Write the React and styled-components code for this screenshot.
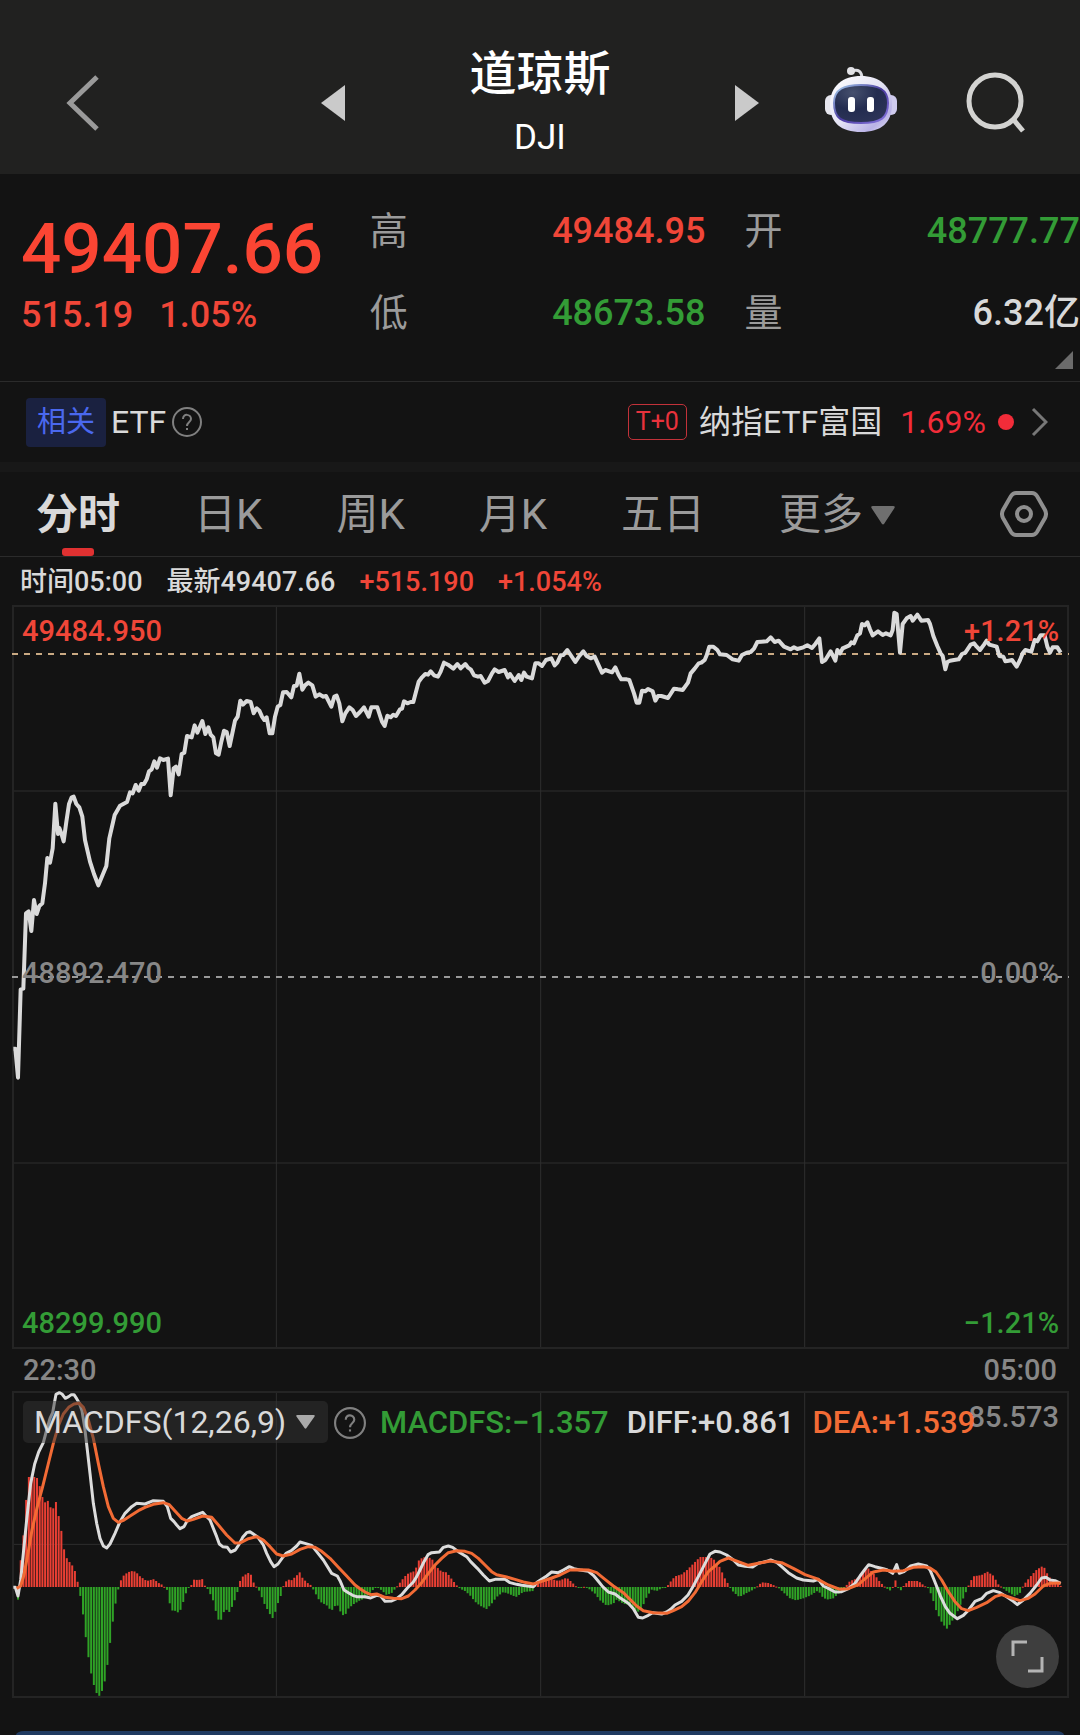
import React, { useState } from "react";
import styled, { createGlobalStyle } from "styled-components";

const colors = {
  bg: "#131313",
  header: "#212120",
  strip: "#181818",
  line: "#2b2b2b",
  up: "#f04638",
  down: "#339c36",
  white: "#d9d9d9",
  muted: "#9b9b9b",
  dim: "#878787",
  orange: "#f26b35",
};

const GlobalStyle = createGlobalStyle`
  * {
    box-sizing: border-box;
  }

  body {
    margin: 0;
    background-color: ${colors.bg};
    color: ${colors.white};
    font-family: Roboto, "Noto Sans CJK SC", sans-serif;
    line-height: 1.2;
    overflow-x: hidden;
  }

  button,
  select {
    margin: 0;
    padding: 0;
    border: none;
    background: none;
    color: inherit;
    font: inherit;
    cursor: pointer;
  }

  svg {
    display: block;
  }
`;

const Page = styled.main`
  display: flex;
  flex-direction: column;
  min-height: 100vh;
`;

/* ---------- header ---------- */

const Header = styled.header`
  display: grid;
  grid-template-columns: 22fr 30fr 22fr;
  align-items: center;
  padding-top: 32px;
  background-color: ${colors.header};
`;

const HeaderSide = styled.div`
  display: flex;
  align-items: center;
  justify-content: ${({ end }) => (end ? "flex-end" : "flex-start")};
  gap: 68px;
  padding: ${({ end }) => (end ? "0 53px 0 0" : "0 0 0 64px")};
`;

const Switcher = styled.div`
  display: flex;
  align-items: center;
  justify-content: space-between;
`;

const Title = styled.div`
  padding: 10px 0 4px;
  text-align: center;
  color: #fff;

  h1 {
    margin: 0;
    font-size: 47px;
    line-height: 64px;
    font-weight: 500;
  }

  p {
    margin: 0;
    font-size: 35px;
    line-height: 64px;
  }
`;

/* ---------- quote ---------- */

const Quote = styled.section`
  position: relative;
  display: grid;
  grid-template-columns: 12fr 13fr 13fr;
  column-gap: 39px;
  padding: 17px 0 26px 21px;
  border-bottom: 1px solid ${colors.line};
`;

const Price = styled.div`
  padding-top: 18px;
  color: #fb4533;
  font-weight: 500;
`;

const Last = styled.div`
  font-size: 71px;
  line-height: 80px;
`;

const Change = styled.div`
  display: flex;
  gap: 26px;
  font-size: 36px;
  line-height: 52px;
  color: ${colors.up};
`;

const Stats = styled.dl`
  margin: 0;
`;

const Stat = styled.div`
  display: flex;
  align-items: center;
  justify-content: space-between;
  height: 82px;
  font-size: 36px;

  dt {
    font-size: 38px;
    color: ${colors.muted};
  }

  dd {
    margin: 0;
    font-weight: 500;
    color: ${({ color }) => colors[color]};
  }
`;

const Corner = styled.button`
  position: absolute;
  right: 7px;
  bottom: 12px;
`;

/* ---------- related etf ---------- */

const EtfBar = styled.section`
  display: flex;
  align-items: center;
  justify-content: space-between;
  height: 80px;
  padding: 0 32px 0 26px;
  font-size: 32px;
`;

const EtfGroup = styled.div`
  display: flex;
  align-items: center;
`;

const EtfLink = styled.a`
  display: flex;
  align-items: center;
  color: inherit;
  text-decoration: none;
`;

const Badge = styled.span`
  margin-right: 5px;
  padding: 0 11px;
  border-radius: 4px;
  background-color: #1a2140;
  color: #4a68ee;
  font-size: 29px;
  line-height: 49px;
`;

const HelpButton = styled.button`
  margin-left: 6px;
`;

const Tag = styled.span`
  margin-right: 12px;
  padding: 0 7px;
  border: 1px solid #c2323a;
  border-radius: 5px;
  color: #e8323c;
  font-size: 25px;
  line-height: 34px;
`;

const EtfChange = styled.span`
  margin-left: 18px;
  color: #f22c39;
`;

const Dot = styled.span`
  width: 16px;
  height: 16px;
  margin: 0 17px 0 12px;
  border-radius: 50%;
  background-color: #f22c39;
`;

const Strip = styled.div`
  height: 10px;
  background-color: ${colors.strip};
`;

/* ---------- tabs ---------- */

const TabBar = styled.nav`
  display: flex;
  align-items: center;
  justify-content: space-between;
  height: 85px;
  padding: 0 32px 0 36px;
  border-bottom: 1px solid ${colors.line};
`;

const Tabs = styled.div`
  display: flex;
  gap: 74px;
  height: 100%;
`;

const Tab = styled.button`
  position: relative;
  display: flex;
  align-items: center;
  gap: 8px;
  padding-top: 3px;
  font-size: 42px;
  font-weight: ${({ active }) => (active ? 700 : 400)};
  color: ${({ active }) => (active ? colors.white : colors.muted)};

  &::after {
    content: "";
    display: ${({ active }) => (active ? "block" : "none")};
    position: absolute;
    left: calc(50% - 16px);
    bottom: 0;
    width: 32px;
    height: 8px;
    border-radius: 3px;
    background-color: #e03131;
  }
`;

/* ---------- charts ---------- */

const InfoRow = styled.div`
  display: flex;
  align-items: center;
  gap: 24px;
  height: 48px;
  padding: 2px 20px 0;
  font-size: 27px;
  font-weight: 500;
`;

const Colored = styled.span`
  color: ${({ color }) => colors[color]};
`;

const Panel = styled.section`
  position: relative;
  margin: 0 11px 0 12px;
  height: ${({ height }) => height}px;
`;

const Plot = styled.svg`
  width: 100%;
  height: 100%;
`;

const AxisLabels = styled.div`
  position: absolute;
  inset: 0;
  display: flex;
  flex-direction: column;
  justify-content: space-between;
  padding: 6px 10px;
  pointer-events: none;
`;

const AxisRow = styled.div`
  display: flex;
  justify-content: ${({ end }) => (end ? "flex-end" : "space-between")};
  padding-bottom: ${({ raised }) => (raised ? 8 : 0)}px;
  font-size: 29px;
  font-weight: 500;
  line-height: 40px;
  color: ${({ color }) => colors[color]};
`;

const TimeAxis = styled.div`
  display: flex;
  justify-content: space-between;
  padding: 0 23px;
  font-size: 29px;
  font-weight: 500;
  line-height: 42px;
  color: ${colors.dim};
`;

const Indicator = styled.div`
  position: absolute;
  top: 10px;
  left: 11px;
  display: flex;
  align-items: center;
  font-size: 31px;
  line-height: 42px;
  white-space: nowrap;
`;

const Picker = styled.label`
  position: relative;

  select {
    appearance: none;
    height: 42px;
    padding: 0 41px 0 11px;
    border-radius: 5px;
    background-color: rgba(52, 52, 52, 0.5);
    font-size: 32px;
  }

  svg {
    position: absolute;
    right: 13px;
    top: 14px;
    pointer-events: none;
  }
`;

const Readings = styled.div`
  display: flex;
  gap: 18px;
  margin-left: 14px;
  font-weight: 500;
`;

const Expand = styled.button`
  position: absolute;
  right: 10px;
  bottom: 10px;
  display: grid;
  place-items: center;
  width: 63px;
  height: 63px;
  border-radius: 50%;
  background-color: #3e3e3e;
`;

const BottomSheet = styled.div`
  height: 4px;
  margin: 33px 16px 0;
  border-radius: 8px 8px 0 0 / 4px 4px 0 0;
  background-color: #1f3a60;
`;

/* ---------- data ---------- */

const price =
  "40,1346 46,1346 54,1433 62,1168 70,1166 78,940 86,934 94,993 102,900 110,942 118,918 127,910 135,850 142,774 150,788 158,745 166,611 174,702 178,684 184,700 191,724 199,665 207,612 215,592 221,590 229,612 238,622 247,650 255,720 270,785 282,822 295,856 305,832 319,798 328,715 344,645 360,617 381,606 390,577 398,580 407,555 416,572 424,552 432,552 440,538 447,514 455,508 463,484 471,503 480,475 490,480 504,476 512,586 521,505 528,500 536,523 545,462 553,458 561,408 575,412 584,376 592,398 607,363 616,402 625,382 632,404 640,412 648,460 656,464 664,425 672,392 680,396 689,438 705,362 713,350 721,302 729,314 740,303 752,306 761,340 770,325 778,332 786,350 793,360 800,352 809,400 817,400 825,350 833,320 841,315 849,277 860,276 874,292 882,258 890,257 898,221 907,269 915,256 925,248 937,256 947,290 958,283 970,290 978,288 994,320 1003,290 1010,287 1018,310 1027,364 1036,340 1048,322 1058,330 1068,348 1080,336 " +
  "1092,322 1106,350 1114,322 1132,322 1146,365 1154,378 1162,347 1172,352 1180,344 1188,348 1200,328 1206,326 1212,304 1222,310 1232,306 1240,306 1248,275 1256,245 1266,232 1276,222 1284,224 1292,214 1302,226 1314,230 1322,215 1332,188 1344,194 1360,206 1372,192 1382,205 1396,192 1404,203 1412,208 1422,226 1434,230 1442,228 1454,248 1464,243 1476,220 1484,208 1496,216 1514,210 1524,232 1530,222 1544,243 1556,225 1564,240 1572,218 1580,230 1596,235 1606,190 1616,190 1626,198 1638,180 1654,175 1664,196 1672,188 1682,166 1690,165 1702,150 1714,168 1726,186 1738,168 1750,154 1760,168 1772,175 1784,170 1796,196 1806,218 1816,210 1836,217 1846,202 1856,225 1864,238 1880,238 1888,240 1902,280 1910,308 1918,308 1926,272 1936,274 1944,267 1958,274 1966,302 1974,288 1984,288 2004,294 2022,266 2034,268 2048,270 2064,248 2072,220 2084,206 2096,190 2104,188 2114,180 2120,166 2128,140 2140,140 2152,150 " +
  "2160,163 2180,165 2198,178 2216,182 2226,165 2240,158 2252,156 2262,146 2272,126 2284,125 2300,124 2312,112 2324,126 2336,122 2352,140 2372,148 2382,142 2392,147 2410,142 2422,136 2436,144 2446,132 2458,115 2466,186 2476,180 2492,154 2500,170 2506,182 2512,150 2520,160 2528,145 2548,136 2554,127 2562,130 2572,106 2580,100 2586,72 2594,76 2602,67 2610,88 2618,106 2634,94 2648,105 2658,100 2672,106 2678,90 2683,38 2690,42 2700,158 2708,72 2720,55 2732,48 2738,62 2752,44 2764,62 2784,60 2790,72 2800,108 2812,138 2822,160 2828,168 2836,208 2842,186 2850,182 2862,180 2876,178 2886,162 2896,158 2912,134 2922,130 2930,140 2940,150 2952,134 2960,122 2968,134 2990,140 2998,168 3010,170 3016,184 3026,182 3036,180 3050,200 3060,180 3068,160 3076,150 3094,155 3104,120 3112,124 3122,106 3134,106 3142,140 3150,158 3158,142 3172,142 3182,158";

const diff =
  "40,742 46,742 54,768 62,720 70,640 80,540 92,430 104,372 116,336 130,308 140,270 150,235 158,218 163,190 168,163 178,158 186,162 196,175 206,170 214,164 222,164 230,176 238,190 246,212 254,262 262,330 270,400 280,490 290,550 300,595 310,618 320,624 330,612 345,580 360,545 375,520 395,500 410,490 435,492 460,482 490,484 502,500 512,535 522,545 530,555 540,566 552,560 560,545 575,530 590,524 608,517 618,528 630,540 640,565 650,590 658,612 668,620 682,622 692,636 706,630 716,615 728,592 740,578 750,575 760,582 774,592 790,615 800,640 812,665 822,680 834,672 846,655 858,640 874,632 890,618 900,606 915,610 935,616 950,635 970,660 995,700 1012,708 1020,722 1032,750 1045,758 1058,766 1070,770 1080,770 " +
  "1095,770 1112,774 1130,766 1142,768 1155,784 1175,783 1190,776 1205,764 1222,744 1240,726 1250,710 1260,690 1272,665 1284,644 1295,638 1318,636 1330,622 1345,618 1358,622 1375,635 1400,650 1412,665 1432,685 1450,705 1468,723 1485,718 1515,718 1530,728 1550,733 1565,736 1600,740 1612,726 1640,708 1655,696 1675,698 1690,690 1708,680 1722,686 1740,690 1765,694 1780,706 1792,720 1808,740 1825,756 1845,762 1862,775 1885,790 1900,806 1915,832 1928,834 1945,826 1958,818 1985,822 2000,816 2012,808 2025,795 2045,784 2064,765 2080,738 2100,700 2118,665 2130,642 2145,634 2160,636 " +
  "2180,645 2200,660 2215,675 2235,679 2258,681 2275,670 2300,664 2312,660 2330,667 2345,680 2365,698 2390,714 2410,720 2440,723 2455,718 2470,738 2485,745 2505,756 2525,755 2545,746 2565,730 2580,708 2597,685 2606,674 2625,680 2650,686 2662,690 2678,700 2690,674 2698,700 2712,695 2732,678 2755,672 2780,678 2790,690 2800,714 2812,744 2822,770 2836,800 2850,820 2872,836 2890,826 2906,810 2925,784 2945,776 2960,760 2980,752 3000,758 3020,770 3040,784 3052,794 3070,780 3090,760 3110,735 3125,714 3138,712 3150,720 3165,722 3182,730";

const dea =
  "50,745 62,738 72,705 84,640 96,570 112,500 128,440 144,375 160,310 175,258 190,222 206,202 222,192 238,190 250,202 265,240 280,295 295,370 310,440 325,500 340,535 355,547 372,540 395,525 415,512 435,502 460,493 490,488 508,494 525,513 545,535 562,543 580,538 608,528 635,532 655,555 680,585 705,609 722,608 745,596 770,590 790,600 810,620 830,642 850,648 875,642 900,628 925,620 945,622 965,634 990,655 1015,682 1040,708 1065,735 1080,746 " +
  "1095,756 1112,764 1130,762 1155,772 1180,775 1205,776 1225,768 1245,750 1265,728 1285,700 1305,675 1325,655 1345,638 1370,632 1395,634 1415,640 1435,655 1455,675 1475,695 1490,704 1520,711 1545,718 1570,726 1600,732 1625,724 1655,714 1680,705 1710,690 1740,689 1765,690 1790,698 1815,718 1840,738 1870,758 1890,778 1910,798 1930,812 1960,818 2000,820 2020,812 2045,800 2065,783 2085,758 2105,725 2125,695 2145,678 2160,664 " +
  "2185,654 2215,665 2245,676 2275,670 2310,663 2345,668 2380,685 2415,704 2450,716 2485,735 2520,748 2545,746 2575,734 2600,712 2620,696 2650,690 2680,694 2710,692 2740,682 2770,680 2790,684 2808,696 2825,720 2845,755 2865,785 2885,806 2905,812 2930,802 2960,788 2985,770 3005,764 3035,774 3060,782 3085,775 3105,762 3130,738 3150,730 3182,729";

// [x, height] turning points of the histogram, positive is above zero
const histogram = [
  [46, 0], [54, -40], [60, 60], [70, 150], [78, 255], [84, 330], [110, 330], [120, 300],
  [132, 250], [142, 262], [150, 242], [158, 228], [166, 265], [174, 222], [182, 185], [190, 122],
  [198, 90], [206, 78], [222, 58], [231, 25], [238, -10], [246, -55], [254, -125], [262, -188],
  [270, -242], [278, -282], [287, -312], [295, -330], [303, -320], [311, -298], [319, -260], [327, -195],
  [335, -130], [343, -70], [351, -25], [358, 8], [366, 28], [374, 38], [392, 48], [408, 46],
  [416, 35], [440, 18], [463, 24], [472, 14], [488, 6], [496, -3], [504, -12], [512, -70],
  [530, -72], [537, -80], [545, -60], [560, -12], [568, 0], [576, 8], [584, 26], [592, 20],
  [608, 24], [616, 0], [625, -8], [640, -42], [648, -75], [656, -100], [664, -98], [675, -65],
  [688, -75], [700, -52], [712, -16], [719, 16], [730, 34], [745, 42], [754, 36], [762, 10],
  [770, 0], [778, -12], [793, -50], [809, -80], [817, -95], [827, -72], [835, -45], [843, -25],
  [849, 0], [857, 16], [866, 22], [874, 20], [890, 34], [898, 46], [907, 28], [920, 14],
  [932, 6], [940, -8], [960, -44], [980, -55], [994, -72], [1010, -50], [1026, -84], [1035, -85],
  [1045, -65], [1060, -52], [1080, -40], [1095, -34], [1115, -12], [1130, 0], [1145, -10], [1160, -24],
  [1175, -18], [1190, 0], [1205, 20], [1220, 38], [1235, 45], [1245, 48], [1255, 78], [1262, 85],
  [1280, 92], [1296, 84], [1310, 60], [1325, 46], [1340, 44], [1355, 24], [1370, 5], [1380, -5],
  [1395, -12], [1410, -25], [1425, -44], [1440, -56], [1460, -66], [1475, -50], [1490, -30], [1510, -15],
  [1525, -20], [1548, -30], [1570, -15], [1600, -12], [1606, 10], [1630, 22], [1655, 24], [1675, 18],
  [1700, 28], [1715, 15], [1730, 0], [1745, -3], [1755, 2], [1770, -8], [1785, -20], [1800, -40],
  [1820, -56], [1840, -50], [1850, -38], [1870, -50], [1890, -55], [1910, -78], [1925, -65], [1940, -30],
  [1955, -8], [1970, -12], [1985, -4], [2000, 0], [2010, 14], [2025, 32], [2045, 38], [2060, 50],
  [2080, 70], [2100, 90], [2130, 90], [2145, 80], [2160, 58], [2175, 25], [2190, 0], [2200, -15],
  [2218, -30], [2240, -18], [2260, -8], [2270, 0], [2285, 14], [2305, 12], [2320, 6], [2335, -2],
  [2350, -16], [2370, -34], [2388, -40], [2410, -34], [2430, -26], [2455, -10], [2465, -28], [2480, -38],
  [2500, -34], [2520, -16], [2535, 0], [2550, 18], [2570, 25], [2590, 45], [2600, 60], [2620, 42],
  [2640, 15], [2655, 0], [2665, -8], [2674, -12], [2680, 5], [2690, 28], [2697, -20], [2708, 0],
  [2725, 18], [2755, 18], [2770, 6], [2785, -4], [2795, -25], [2810, -75], [2825, -105], [2840, -126],
  [2850, -112], [2870, -80], [2885, -45], [2900, -10], [2908, 10], [2920, 32], [2945, 36], [2962, 46],
  [2980, 34], [2995, 8], [3005, 0], [3020, -12], [3045, -28], [3060, -18], [3070, 5], [3090, 30],
  [3110, 52], [3130, 64], [3142, 40], [3155, 20], [3170, 14], [3178, 10], [3190, -10],
];

const ZERO = 741;
const BAR_COUNT = 387;

const bars = Array.from({ length: BAR_COUNT }, (_, i) => {
  const x = 46 + (i * 3136) / (BAR_COUNT - 1);
  const next = Math.max(1, histogram.findIndex((point) => point[0] >= x));
  const [x0, y0] = histogram[next - 1];
  const [x1, y1] = histogram[next];
  const value = y0 + ((y1 - y0) * (x - x0)) / (x1 - x0);
  return { x: x - 3, value };
});

const columns = [829, 1622, 2414];

const tabs = ["分时", "日K", "周K", "月K", "五日", "更多"];

const stats = [
  [
    { label: "高", value: "49484.95", color: "up" },
    { label: "低", value: "48673.58", color: "down" },
  ],
  [
    { label: "开", value: "48777.77", color: "down" },
    { label: "量", value: "6.32亿", color: "white" },
  ],
];

/* ---------- icons ---------- */

const BackIcon = () => (
  <svg width="37" height="58" viewBox="0 0 37 58" fill="none">
    <path d="M33 3L6 29L33 55" stroke="#9a9a9a" strokeWidth="5" />
  </svg>
);

const ArrowIcon = ({ right }) => (
  <svg width="24" height="36" viewBox="0 0 24 36">
    <path d={right ? "M0 0L24 18L0 36Z" : "M24 0L0 18L24 36Z"} fill="#cacaca" />
  </svg>
);

const RobotIcon = () => (
  <svg width="72" height="74" viewBox="0 0 72 74">
    <defs>
      <linearGradient id="shell" x1="0" y1="0" x2="1" y2="1">
        <stop offset="0" stopColor="#ffffff" />
        <stop offset="0.5" stopColor="#e4e3f4" />
        <stop offset="0.8" stopColor="#b9b2e6" />
        <stop offset="1" stopColor="#e6e4f5" />
      </linearGradient>
      <linearGradient id="rim" x1="0" y1="0" x2="1" y2="1">
        <stop offset="0" stopColor="#a9d3ee" />
        <stop offset="0.5" stopColor="#4a3aa0" />
        <stop offset="1" stopColor="#8878e0" />
      </linearGradient>
      <radialGradient id="visor" cx="0.35" cy="0.2" r="0.9">
        <stop offset="0" stopColor="#46506e" />
        <stop offset="0.5" stopColor="#232c50" />
        <stop offset="1" stopColor="#2e3558" />
      </radialGradient>
    </defs>
    <path d="M27 5C33 3 37 5 37 13" stroke="#dcdce2" strokeWidth="3" fill="none" />
    <circle cx="26" cy="5" r="4" fill="#e2e2e6" />
    <rect x="0" y="29" width="12" height="20" rx="6" fill="#e6e6ee" />
    <rect x="60" y="29" width="12" height="20" rx="6" fill="#cfcbee" />
    <path
      d="M36 10C54 10 67 20 67 38C67 57 56 66 36 66C16 66 5 57 5 38C5 20 18 10 36 10Z"
      fill="url(#shell)"
    />
    <path
      d="M36 19C53 19 63 23 63 37C63 52 56 57 36 57C16 57 9 52 9 37C9 23 19 19 36 19Z"
      fill="url(#visor)"
      stroke="url(#rim)"
      strokeWidth="2"
    />
    <rect x="23" y="31" width="7" height="15" rx="3" fill="#fff" />
    <rect x="42" y="31" width="7" height="15" rx="3" fill="#fff" />
  </svg>
);

const SearchIcon = () => (
  <svg width="62" height="62" viewBox="0 0 62 62" fill="none" stroke="#d3d3d1" strokeWidth="5">
    <circle cx="30" cy="29" r="26" />
    <path d="M48 47L58 59" />
  </svg>
);

const HelpIcon = ({ size = 30 }) => (
  <svg width={size} height={size} viewBox="0 0 30 30" fill="none" stroke="#808080" strokeWidth="2">
    <circle cx="15" cy="15" r="14" />
    <path d="M11 12C11 6 19 7 19 12C19 15 15 15 15 19" />
    <path d="M15 21V23" />
  </svg>
);

const ChevronIcon = () => (
  <svg width="17" height="30" viewBox="0 0 17 30" fill="none">
    <path d="M2 2L15 15L2 28" stroke="#777" strokeWidth="3" />
  </svg>
);

const CaretIcon = ({ width, height, fill }) => (
  <svg width={width} height={height} viewBox="0 0 24 20" preserveAspectRatio="none">
    <path d="M2 0H22Q25 0 23 3L13 19Q12 20 11 19L1 3Q-1 0 2 0Z" fill={fill} />
  </svg>
);

const SettingsIcon = () => (
  <svg width="48" height="46" viewBox="0 0 48 46" fill="none" stroke="#8f8f8f" strokeWidth="4">
    <path d="M16 2H32Q35 2 37 5L45 19Q47 23 45 27L37 41Q35 44 32 44H16Q13 44 11 41L3 27Q1 23 3 19L11 5Q13 2 16 2Z" />
    <circle cx="24" cy="23" r="7" />
  </svg>
);

const ExpandIcon = () => (
  <svg width="33" height="33" viewBox="0 0 33 33" fill="none" stroke="#b4b4b4" strokeWidth="3">
    <path d="M2 16V2H16" />
    <path d="M31 17V31H17" />
  </svg>
);

/* ---------- charts ---------- */

const Grid = ({ top, bottom, rows }) => (
  <g>
    <g stroke="#2e2e2e" strokeWidth="3">
      {columns.map((x) => (
        <line key={x} x1={x} y1={top} x2={x} y2={bottom} />
      ))}
      {rows.map((y) => (
        <line key={y} x1="39" y1={y} x2="3204" y2={y} />
      ))}
    </g>
    <rect
      x="39"
      y={top}
      width="3165"
      height={bottom - top}
      fill="none"
      stroke="#242424"
      strokeWidth="6"
    />
  </g>
);

const Line = ({ points, color, width }) => (
  <polyline
    points={points}
    fill="none"
    stroke={color}
    strokeWidth={width}
    strokeLinejoin="round"
  />
);

const PriceChart = () => (
  <Panel height={744}>
    <Plot viewBox="36 15 3171 2232" preserveAspectRatio="none">
      <Grid top={18} bottom={2244} rows={[573, 1689]} />
      <g strokeWidth="6" strokeDasharray="18 18">
        <line x1="36" y1="162" x2="3207" y2="162" stroke="#c9a983" />
        <line x1="36" y1="1131" x2="3207" y2="1131" stroke="#9a9a9a" />
      </g>
      <Line points={price} color="#dadada" width={12} />
    </Plot>
    <AxisLabels>
      <AxisRow color="up">
        <span>49484.950</span>
        <span>+1.21%</span>
      </AxisRow>
      <AxisRow color="dim" raised>
        <span>48892.470</span>
        <span>0.00%</span>
      </AxisRow>
      <AxisRow color="down">
        <span>48299.990</span>
        <span>−1.21%</span>
      </AxisRow>
    </AxisLabels>
  </Panel>
);

const MacdChart = () => (
  <Panel height={307}>
    <Plot viewBox="36 153 3171 921" preserveAspectRatio="none">
      <Grid top={156} bottom={1071} rows={[613]} />
      {bars.map(({ x, value }) => (
        <rect
          key={x}
          x={x}
          y={value > 0 ? ZERO - value : ZERO}
          width="6"
          height={Math.max(3, Math.abs(value))}
          fill={value > 0 ? "#ea3f34" : "#2fa326"}
        />
      ))}
      <Line points={diff} color="#dcdcdc" width={9} />
      <Line points={dea} color={colors.orange} width={9} />
    </Plot>
    <AxisLabels>
      <AxisRow color="dim" end>
        <span>85.573</span>
      </AxisRow>
    </AxisLabels>
    <Indicator>
      <Picker>
        <select aria-label="指标">
          <option>MACDFS(12,26,9)</option>
        </select>
        <CaretIcon width={19} height={14} fill="#a9a9a9" />
      </Picker>
      <HelpButton aria-label="指标说明">
        <HelpIcon size={32} />
      </HelpButton>
      <Readings>
        <Colored color="down">MACDFS:−1.357</Colored>
        <Colored color="white">DIFF:+0.861</Colored>
        <Colored color="orange">DEA:+1.539</Colored>
      </Readings>
    </Indicator>
    <Expand aria-label="全屏">
      <ExpandIcon />
    </Expand>
  </Panel>
);

const App = () => {
  const [active, setActive] = useState("分时");

  return (
    <Page>
      <GlobalStyle />
      <Header>
        <HeaderSide>
          <button aria-label="返回">
            <BackIcon />
          </button>
        </HeaderSide>
        <Switcher>
          <button aria-label="上一个">
            <ArrowIcon />
          </button>
          <Title>
            <h1>道琼斯</h1>
            <p>DJI</p>
          </Title>
          <button aria-label="下一个">
            <ArrowIcon right />
          </button>
        </Switcher>
        <HeaderSide end>
          <button aria-label="智能助手">
            <RobotIcon />
          </button>
          <button aria-label="搜索">
            <SearchIcon />
          </button>
        </HeaderSide>
      </Header>

      <Quote>
        <Price>
          <Last>49407.66</Last>
          <Change>
            <span>515.19</span>
            <span>1.05%</span>
          </Change>
        </Price>
        {stats.map((group) => (
          <Stats key={group[0].label}>
            {group.map(({ label, value, color }) => (
              <Stat key={label} color={color}>
                <dt>{label}</dt>
                <dd>{value}</dd>
              </Stat>
            ))}
          </Stats>
        ))}
        <Corner aria-label="展开">
          <svg width="18" height="18" viewBox="0 0 18 18">
            <path d="M18 0V18H0Z" fill="#6b6b6b" />
          </svg>
        </Corner>
      </Quote>

      <EtfBar>
        <EtfGroup>
          <Badge>相关</Badge>
          <span>ETF</span>
          <HelpButton aria-label="说明">
            <HelpIcon />
          </HelpButton>
        </EtfGroup>
        <EtfLink href="#etf">
          <Tag>T+0</Tag>
          <span>纳指ETF富国</span>
          <EtfChange>1.69%</EtfChange>
          <Dot />
          <ChevronIcon />
        </EtfLink>
      </EtfBar>
      <Strip />

      <TabBar>
        <Tabs>
          {tabs.map((tab) => (
            <Tab key={tab} active={tab === active ? 1 : 0} onClick={() => setActive(tab)}>
              {tab}
              {tab === "更多" && <CaretIcon width={24} height={19} fill="#6f6f6f" />}
            </Tab>
          ))}
        </Tabs>
        <button aria-label="设置">
          <SettingsIcon />
        </button>
      </TabBar>

      <InfoRow>
        <span>时间05:00</span>
        <span>最新49407.66</span>
        <Colored color="up">+515.190</Colored>
        <Colored color="up">+1.054%</Colored>
      </InfoRow>
      <PriceChart />
      <TimeAxis>
        <span>22:30</span>
        <span>05:00</span>
      </TimeAxis>
      <MacdChart />
      <BottomSheet />
    </Page>
  );
};

export default App;
